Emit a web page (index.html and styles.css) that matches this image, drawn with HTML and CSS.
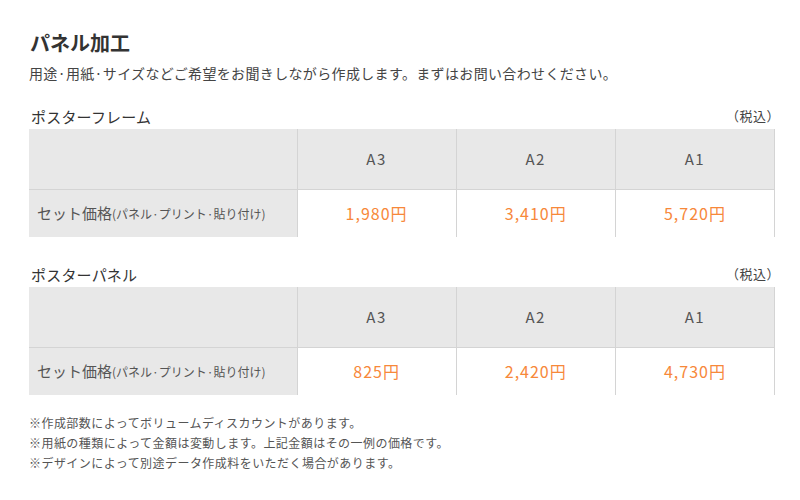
FILE: index.html
```html
<!DOCTYPE html>
<html lang="ja">
<head>
<meta charset="utf-8">
<title>パネル加工</title>
<link rel="stylesheet" href="styles.css">
</head>
<body>
<div class="page">
  <h1 class="title">パネル加工</h1>
  <p class="lead">用途·用紙·サイズなどご希望をお聞きしながら作成します。まずはお問い合わせください。</p>

  <section class="block">
    <div class="block-head">
      <h2 class="block-title">ポスターフレーム</h2>
      <span class="tax">（税込）</span>
    </div>
    <table class="price">
      <tr class="head-row">
        <th class="label"></th>
        <th>A3</th>
        <th>A2</th>
        <th>A1</th>
      </tr>
      <tr class="body-row">
        <th class="label">セット価格<small>(パネル·プリント·貼り付け)</small></th>
        <td>1,980円</td>
        <td>3,410円</td>
        <td>5,720円</td>
      </tr>
    </table>
  </section>

  <section class="block">
    <div class="block-head">
      <h2 class="block-title">ポスターパネル</h2>
      <span class="tax">（税込）</span>
    </div>
    <table class="price">
      <tr class="head-row">
        <th class="label"></th>
        <th>A3</th>
        <th>A2</th>
        <th>A1</th>
      </tr>
      <tr class="body-row">
        <th class="label">セット価格<small>(パネル·プリント·貼り付け)</small></th>
        <td>825円</td>
        <td>2,420円</td>
        <td>4,730円</td>
      </tr>
    </table>
  </section>

  <ul class="notes">
    <li>※作成部数によってボリュームディスカウントがあります。</li>
    <li>※用紙の種類によって金額は変動します。上記金額はその一例の価格です。</li>
    <li>※デザインによって別途データ作成料をいただく場合があります。</li>
  </ul>
</div>
</body>
</html>
```

FILE: styles.css
```css
* { box-sizing: border-box; }
body {
  margin: 0;
  background: #fff;
  font-family: "Noto Sans CJK JP", "Noto Sans", sans-serif;
  color: #444;
}
.page {
  width: 800px;
  padding: 29px 25px 0 29px;
}
.title {
  margin: 0 0 0 1px;
  font-size: 20px;
  line-height: 28px;
  font-weight: bold;
  color: #333;
}
.lead {
  margin: 6px 0 0;
  font-size: 14px;
  line-height: 20px;
  letter-spacing: 0.35px;
  color: #444;
}
.block { margin-top: 20px; }
.block + .block { margin-top: 24px; }
.block-head {
  display: flex;
  justify-content: space-between;
  align-items: flex-end;
  height: 26px;
}
.block-title {
  margin: 0 0 1px 2px;
  font-size: 15px;
  font-weight: normal;
  line-height: 22px;
  letter-spacing: 0.2px;
  color: #333;
}
.tax {
  font-size: 13px;
  line-height: 20px;
  letter-spacing: 0.5px;
  color: #444;
  margin-bottom: 3px;
  margin-right: -5px;
}
.price {
  border-collapse: collapse;
  width: 746px;
  table-layout: fixed;
}
.price th, .price td {
  border-right: 1px solid #d4d4d4;
  padding: 0;
  text-align: center;
}
.price .label { width: 268px; }
.head-row th {
  height: 60px;
  background: #e8e8e8;
  border-bottom: 1px solid #d4d4d4;
  font-size: 15px;
  font-weight: normal;
  letter-spacing: 1.5px;
  color: #555;
}
.body-row th, .body-row td { height: 48px; }
.body-row .label {
  background: #e8e8e8;
  text-align: left;
  padding-left: 8px;
  padding-bottom: 1px;
  font-size: 15px;
  font-weight: normal;
  color: #555;
}
.body-row .label small { font-size: 12px; }
.body-row td {
  font-size: 16px;
  letter-spacing: 1px;
  color: #f7883a;
}
.notes {
  list-style: none;
  margin: 18px 0 0;
  padding: 0;
  font-size: 12px;
  line-height: 20px;
  letter-spacing: 0.45px;
  color: #555;
}
```
